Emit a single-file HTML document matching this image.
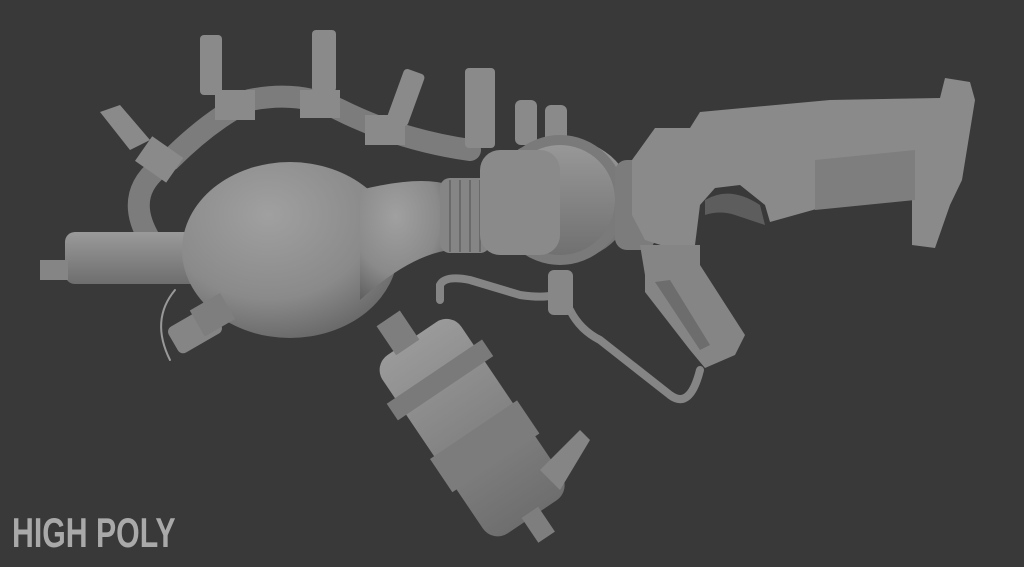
<!DOCTYPE html>
<html><head><style>
html,body{margin:0;padding:0;background:#393939;width:1024px;height:567px;overflow:hidden}
svg{position:absolute;left:0;top:0}
.t{position:absolute;left:12px;top:509px;font-family:"Liberation Sans",sans-serif;font-weight:bold;font-size:42px;line-height:48px;color:#a9a9a9;letter-spacing:0;transform:scaleX(0.72);transform-origin:left top;white-space:nowrap}
</style></head><body>
<svg width="1024" height="567" viewBox="0 0 1024 567">
<defs>
<radialGradient id="bulb" cx="0.4" cy="0.3" r="0.8">
<stop offset="0" stop-color="#a0a0a0"/><stop offset="0.6" stop-color="#8a8a8a"/><stop offset="1" stop-color="#5f5f5f"/>
</radialGradient>
<linearGradient id="v" x1="0" y1="0" x2="0" y2="1">
<stop offset="0" stop-color="#9a9a9a"/><stop offset="1" stop-color="#6e6e6e"/>
</linearGradient>
</defs>
<g fill="none" stroke="#7c7c7c" stroke-linecap="round">
<path d="M150 240 Q120 190 170 160 Q210 120 250 100 Q300 90 340 110 Q400 140 470 150" stroke-width="22"/>
<path d="M440 300 L440 285 Q445 275 470 280 L520 295 Q555 300 560 290" stroke-width="8" stroke="#858585"/>
<path d="M570 310 Q580 330 600 340 L670 395 Q690 410 700 370" stroke-width="8" stroke="#858585"/>
<path d="M175 290 Q150 320 170 360" stroke-width="2" stroke="#999"/>
</g>
<g fill="#8a8a8a">
<path d="M100 112 L130 150 L150 140 L120 105 Z"/><rect x="140" y="145" width="38" height="30" transform="rotate(35 160 160)"/>
<rect x="200" y="35" width="22" height="60" rx="4"/><rect x="215" y="90" width="40" height="30"/>
<rect x="312" y="30" width="24" height="62" rx="4"/><rect x="300" y="90" width="40" height="28"/>
<rect x="395" y="70" width="22" height="55" rx="4" transform="rotate(20 406 97)"/><rect x="365" y="115" width="40" height="30"/>
<rect x="465" y="68" width="30" height="80" rx="4"/><rect x="515" y="100" width="22" height="45" rx="6"/>
<rect x="545" y="105" width="22" height="45" rx="6"/>
</g>
<rect x="65" y="232" width="140" height="52" rx="10" fill="url(#v)"/>
<rect x="40" y="260" width="28" height="20" fill="#858585"/>
<ellipse cx="290" cy="250" rx="108" ry="88" fill="url(#bulb)"/>
<path d="M360 190 Q420 175 450 185 L450 250 Q410 255 360 300 Z" fill="url(#bulb)"/>
<rect x="440" y="178" width="50" height="75" rx="10" fill="#858585"/>
<g stroke="#6a6a6a" stroke-width="2"><line x1="450" y1="180" x2="450" y2="252"/><line x1="460" y1="180" x2="460" y2="252"/><line x1="470" y1="180" x2="470" y2="252"/><line x1="480" y1="180" x2="480" y2="252"/></g>
<ellipse cx="560" cy="200" rx="72" ry="62" fill="url(#v)"/>
<circle cx="560" cy="200" r="60" fill="none" stroke="#7a7a7a" stroke-width="10"/>
<rect x="480" y="150" width="80" height="105" rx="20" fill="#8a8a8a"/>
<rect x="615" y="160" width="40" height="90" rx="12" fill="#7c7c7c"/>
<rect x="548" y="270" width="25" height="45" rx="6" fill="#878787"/>
<path d="M632 160 L655 128 L690 128 L700 112 L830 100 L940 98 L945 78 L970 82 L975 100 L962 180 L950 205 L935 248 L912 245 L912 200 L905 198 L820 208 L770 222 L765 205 L740 185 L715 188 L700 205 L695 245 L670 248 L645 240 L632 215 Z" fill="#8a8a8a"/>
<path d="M815 160 L915 150 L915 200 L815 210 Z" fill="#7e7e7e"/>
<path d="M705 200 Q730 185 760 205 L765 225 L735 215 Q720 210 705 215 Z" fill="#5d5d5d"/>
<path d="M640 245 L700 245 L700 265 L745 335 L735 355 L705 368 L690 350 L645 292 L645 275 Z" fill="#858585"/>
<path d="M655 282 L670 280 L710 345 L700 350 Z" fill="#6d6d6d"/>
<g transform="rotate(-34 470 420)">
<rect x="420" y="320" width="95" height="215" rx="18" fill="url(#v)"/>
<rect x="410" y="360" width="115" height="20" fill="#7a7a7a"/>
<rect x="415" y="430" width="105" height="40" fill="#7c7c7c"/>
<rect x="445" y="290" width="28" height="35" fill="#7e7e7e"/>
<rect x="458" y="530" width="20" height="30" fill="#7e7e7e"/>
</g>
<path d="M540 470 L580 430 L590 440 L560 490 Z" fill="#858585"/>
<rect x="170" y="315" width="50" height="30" rx="6" fill="#858585" transform="rotate(-30 195 330)"/>
<rect x="195" y="300" width="35" height="30" fill="#7e7e7e" transform="rotate(-30 212 315)"/>
</svg>
<div class="t">HIGH POLY</div>
</body></html>
